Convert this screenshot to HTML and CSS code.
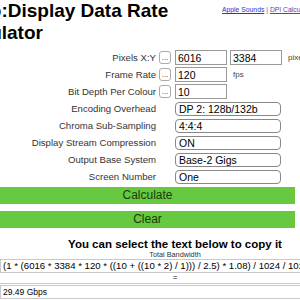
FILE: index.html
```html
<!DOCTYPE html>
<html lang="en">
<head>
    <meta charset="UTF-8">
    <meta name="viewport" content="width=device-width, initial-scale=1.0">
    <title>Video:Display Data Rate Calculator</title>
    <link rel="stylesheet" href="styles.css">
</head>
<body>
    <div class="page">
        <div class="top">
            <h1>Video:Display Data Rate Calculator</h1>
            <div class="links"><a href="#">Apple Sounds</a> | <a href="#" class="seen">DPI Calculator</a></div>
        </div>

        <div class="calc">
            <label>Pixels X:Y</label>
            <span class="more">...</span>
            <div class="value">
                <input type="text" class="num" value="6016">
                <input type="text" class="num" value="3384">
                <span class="unit">pixels</span>
            </div>

            <label>Frame Rate</label>
            <span class="more">...</span>
            <div class="value">
                <input type="text" class="num" value="120">
                <span class="unit">fps</span>
            </div>

            <label>Bit Depth Per Colour</label>
            <span class="more">...</span>
            <div class="value">
                <input type="text" class="num" value="10">
            </div>

            <label>Encoding Overhead</label>
            <span></span>
            <div class="value"><div class="pick">DP 2: 128b/132b</div></div>

            <label>Chroma Sub-Sampling</label>
            <span></span>
            <div class="value"><div class="pick">4:4:4</div></div>

            <label>Display Stream Compression</label>
            <span></span>
            <div class="value"><div class="pick">ON</div></div>

            <label>Output Base System</label>
            <span></span>
            <div class="value"><div class="pick">Base-2 Gigs</div></div>

            <label>Screen Number</label>
            <span></span>
            <div class="value"><div class="pick">One</div></div>
        </div>

        <button class="go">Calculate</button>
        <button class="go">Clear</button>

        <h2>You can select the text below to copy it</h2>
        <div class="caption">Total Bandwidth</div>
        <div class="formula">(1 * (6016 * 3384 * 120 * ((10 + ((10 * 2) / 1))) / 2.5) * 1.08) / 1024 / 1024 / 1024</div>
        <div class="equals">=</div>
        <div class="answer">29.49 Gbps</div>
    </div>
</body>
</html>
```

FILE: styles.css
```css
:root {
    --green: #66c93f;
    --line: #c8c8c8;
    --label: #333333;
}

* {
    box-sizing: border-box;
}

html, body {
    margin: 0;
    overflow: hidden;
}

body {
    font-family: 'Liberation Sans', Arial, sans-serif;
    color: #000;
    background: #fff;
}

.page {
    width: 350px;
}

.top {
    display: flex;
    align-items: flex-start;
}

.top h1 {
    flex: 0 0 272px;
    margin: 0 0 0 -50px;
    font-size: 19px;
    line-height: 22px;
    font-weight: bold;
}

.links {
    margin-top: 6px;
    font-size: 6.8px;
    white-space: nowrap;
    color: #666;
}

.links a {
    color: #3030d0;
}

.links a.seen {
    color: #6a3aa8;
}

.calc {
    display: grid;
    grid-template-columns: 156px 15px auto;
    grid-auto-rows: 15px;
    row-gap: 2px;
    column-gap: 2px;
    margin-top: 6px;
    align-items: center;
}

.calc label {
    text-align: right;
    font-size: 9.6px;
    color: var(--label);
    white-space: nowrap;
}

.more {
    width: 12px;
    height: 13px;
    margin-left: 1px;
    border: 1px solid #aaa;
    border-radius: 3px;
    font-size: 8px;
    line-height: 12px;
    text-align: center;
    color: #333;
}

.value {
    display: flex;
    align-items: center;
    gap: 3px;
    height: 15px;
}

.num {
    width: 52px;
    height: 15px;
    margin: 0;
    padding: 0 2px;
    border: 1px solid #999;
    font-family: inherit;
    font-size: 10.5px;
    color: #000;
}

.unit {
    margin-left: 3px;
    font-size: 8px;
    color: #444;
}

.pick {
    width: 106px;
    height: 14px;
    padding: 0 3px;
    border: 1px solid #888;
    border-radius: 4px;
    font-size: 10.5px;
    line-height: 12px;
}

.go {
    display: block;
    width: 295px;
    height: 16px;
    margin: 3px 0 0;
    padding: 0;
    border: none;
    background: var(--green);
    box-shadow: 0 1px 0 #999;
    font-family: inherit;
    font-size: 12px;
    color: #1c3a12;
}

.go + .go {
    margin-top: 8px;
}

h2 {
    margin: 10px 0 0;
    font-size: 11.5px;
    line-height: 14px;
    text-align: center;
}

.caption {
    font-size: 7.3px;
    line-height: 8px;
    text-align: center;
    color: #333;
}

.formula {
    height: 14px;
    padding: 0 2px;
    border: 1px solid var(--line);
    font-size: 9.6px;
    line-height: 12px;
    white-space: nowrap;
    overflow: hidden;
}

.equals {
    height: 11px;
    border-bottom: 1px solid var(--line);
    font-size: 8px;
    line-height: 10px;
    text-align: center;
}

.answer {
    height: 14px;
    margin-top: 1px;
    padding: 0 2px;
    border: 1px solid var(--line);
    font-size: 8.5px;
    line-height: 12px;
}
```
